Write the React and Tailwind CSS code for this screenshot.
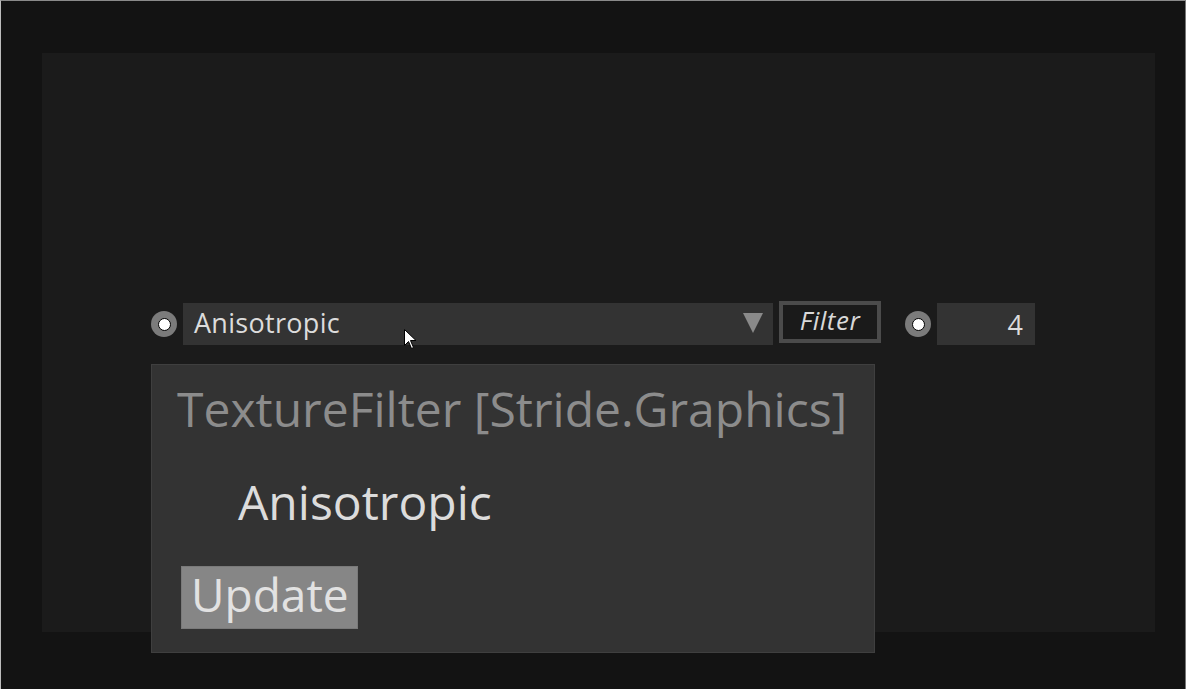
import React from "react";

function Pin() {
  return (
    <div className="w-[26px] h-[26px] rounded-full bg-[#7b7b7b] flex items-center justify-center shrink-0">
      <div className="w-[13px] h-[13px] rounded-full bg-white border-[1.5px] border-black" />
    </div>
  );
}

export default function App() {
  const font = { fontFamily: '"Open Sans", "Noto Sans", sans-serif' };
  return (
    <div
      className="relative w-[1186px] h-[689px] bg-[#131313] border-t border-t-[#8a8a8a] border-l border-l-[#bdbdbd] border-r border-r-[#777] overflow-hidden"
      style={font}
    >
      <div className="pt-[52px] pl-[41px]">
        <div className="w-[1113px] h-[579px] bg-[#1b1b1b] pt-[250px] pl-[109px]">
          <div className="flex items-center">
            <Pin />
            <div className="ml-[6px] w-[590px] h-[42px] bg-[#333333] flex items-center justify-between pl-[11px] pr-[10px]">
              <span className="text-[27px] text-[#dcdcdc] leading-none mb-[4px] tracking-[0.3px]">Anisotropic</span>
              <svg width="20" height="20" viewBox="0 0 20 20" className="mb-[2px]">
                <polygon points="0,0 20,0 10,20" fill="#8a8a8a" />
              </svg>
            </div>
            <div className="ml-[6px] w-[102px] h-[42px] -mt-[4px] border-[4px] border-[#4b4b4b] bg-[#1a1a1a] flex items-center justify-center">
              <span className="italic text-[26px] tracking-[0.5px] text-[#d8d8d8] leading-none mb-[4px]">Filter</span>
            </div>
            <div className="ml-[24px]">
              <Pin />
            </div>
            <div className="ml-[6px] w-[98px] h-[42px] bg-[#333333] flex items-center justify-end pr-[12px]">
              <span className="text-[27px] text-[#dcdcdc] leading-none">4</span>
            </div>
          </div>
        </div>
      </div>

      {/* cursor */}
      <svg className="absolute left-[403px] top-[328px]" width="13" height="21" viewBox="0 0 13 21">
        <path d="M0.5 0.5 L0.5 16.5 L4.5 12.5 L7.5 19.5 L9.5 18.5 L6.5 11.5 L12 11.5 Z" fill="white" stroke="black" strokeWidth="1" />
      </svg>

      {/* tooltip */}
      <div className="absolute left-[150px] top-[363px] w-[724px] h-[289px] bg-[#333333] border border-[#3f3f3f]">
        <div className="pl-[25px] pt-[14px] text-[48px] leading-[60px] text-[#8c8c8c] whitespace-nowrap">
          TextureFilter [Stride.Graphics]
        </div>
        <div className="pl-[86px] mt-[33px] text-[48px] leading-[60px] text-[#dcdcdc]">Anisotropic</div>
        <div className="ml-[29px] mt-[34px] w-[177px] h-[63px] bg-[#868686] border border-[#7a7a7a] pl-[9px] pt-[4px]">
          <span className="block text-[46px] leading-[46px] text-[#e2e2e2]">Update</span>
        </div>
      </div>
    </div>
  );
}
